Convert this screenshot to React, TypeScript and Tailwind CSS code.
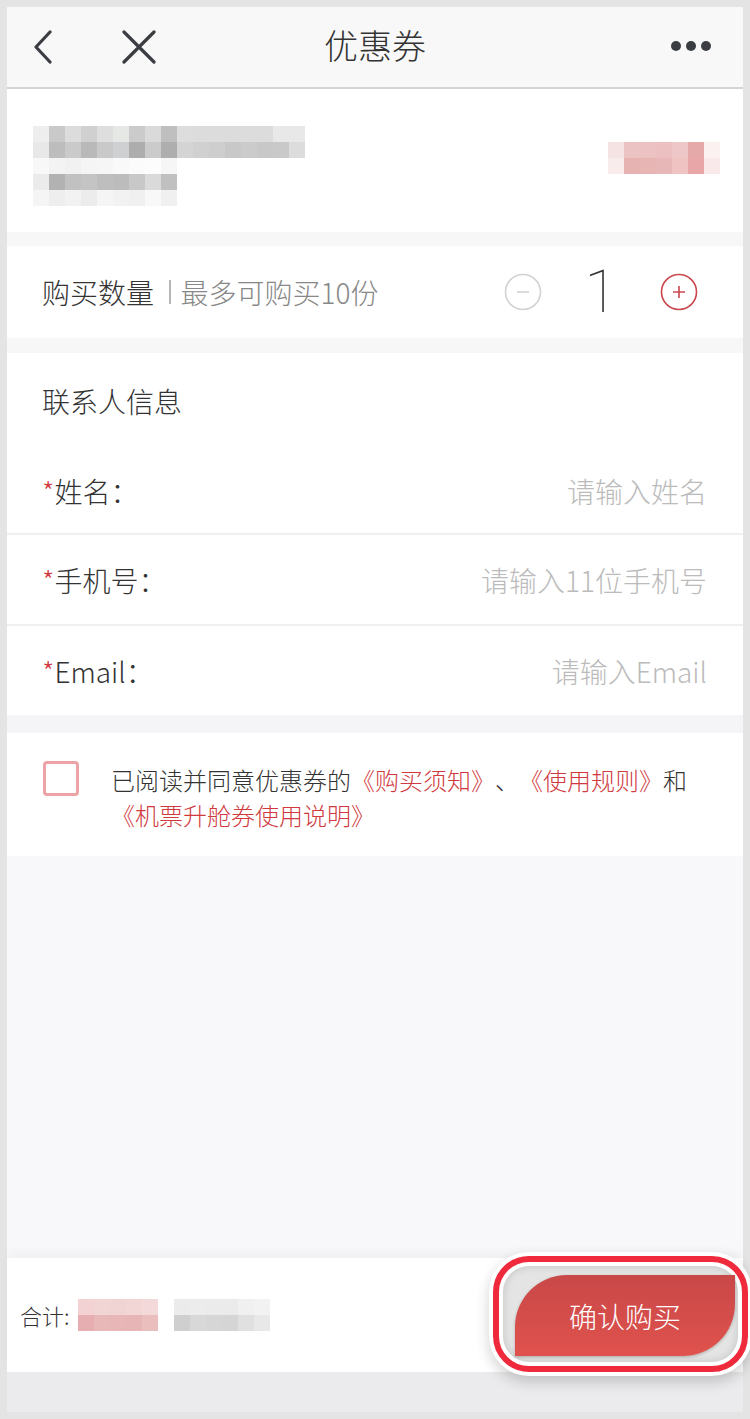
import React from "react";

const FONT = "font-['Noto_Sans_CJK_SC','Noto_Sans',sans-serif] font-light [text-spacing-trim:space-all]";

function Mosaic({ rows, cell = 16, h = 16 }: { rows: string[][]; cell?: number; h?: number }) {
  return (
    <div className="flex flex-col">
      {rows.map((r, i) => (
        <div key={i} className="flex">
          {r.map((c, j) => (
            <div key={j} style={{ width: cell, height: h, background: c }} />
          ))}
        </div>
      ))}
    </div>
  );
}

export default function App() {
  const block1 = [
    ["#eeeeee", "#c9c9c9", "#dcdcdc", "#d0d0d0", "#dedede", "#e6e8e6", "#cbcbcb", "#dadada", "#bfbfbf", "#dddddd", "#dcdcdc", "#dcdcdc", "#dcdcdc", "#dcdcdc", "#dcdcdc", "#e8e8e8", "#e8e8e8"],
    ["#e8e8e8", "#bdbdbd", "#cacaca", "#b9b9b9", "#c9c9c9", "#cfd0d1", "#adadad", "#cbcbcb", "#aeaeae", "#d4d4d4", "#d0d0d0", "#cecece", "#c8c8c8", "#cbcbcb", "#c8c8c8", "#c9c9c9", "#dcdcdc"],
    ["#f8f8f8", "#f3f3f3", "#f1f1f1", "#f5f5f5", "#f6f6f6", "#f9f9f9", "#fbfbfb", "#fcfcfc", "#f6f6f6"],
    ["#ebebeb", "#b2b2b2", "#c1c1c1", "#c4c4c4", "#bebebe", "#bcbcbc", "#c8c8c8", "#dadada", "#c0c0c0"],
    ["#f5f5f5", "#eeeeee", "#f2f2f2", "#ececec", "#f5f5f5", "#f2f2f2", "#f0f0f0", "#f8f8f8", "#f0f0f0"],
  ];
  const pink = [
    ["#f5e3e3", "#ecc3c3", "#ecc2c2", "#ecc0c0", "#eec8c8", "#e5a9a9", "#fbf1f1"],
    ["#f8ecec", "#e6b2b2", "#e8b5b5", "#e6b7b6", "#eec3c2", "#e8a6a8", "#f9e9eb"],
  ];
  const totalPink = [
    ["#f3d2d4", "#f1d4d4", "#f0d4d4", "#f2d6d5", "#f4d9da"],
    ["#e6aeb0", "#e8b8b8", "#e8b6b6", "#e7b5b5", "#ebbebe"],
  ];
  const totalGray = [
    ["#ebebeb", "#ececec", "#ebebeb", "#ebebeb", "#f0f0f0", "#f2f2f2"],
    ["#cfcfcf", "#d8d8d8", "#d6d6d6", "#d5d5d5", "#e0e0e0", "#e8e8e8"],
  ];

  return (
    <div className={`w-[750px] h-[1419px] bg-[#e4e4e4] pt-[7px] pl-[7px] pr-[7px] pb-[7px] overflow-hidden ${FONT} text-[#333]`}>
      <div className="flex flex-col h-[1405px] bg-[#f8f8fa]">
        {/* Header */}
        <div className="relative flex items-center h-[82px] bg-[#f8f8f8] border-b-2 border-[#d4d4d4] shrink-0">
          <svg className="absolute left-[26px] top-[23px]" width="20" height="34" viewBox="0 0 20 34">
            <path d="M17 2 L3 17 L17 32" fill="none" stroke="#3a3d42" strokeWidth="3.2" strokeLinecap="round" strokeLinejoin="round" />
          </svg>
          <svg className="absolute left-[115px] top-[23px]" width="34" height="34" viewBox="0 0 34 34">
            <path d="M2 2 L32 32 M32 2 L2 32" fill="none" stroke="#3a3d42" strokeWidth="3.2" strokeLinecap="round" />
          </svg>
          <div className="w-full text-center text-[34px] leading-none text-[#333] pb-[4px]">优惠券</div>
          <div className="absolute right-[32px] top-[34px] flex gap-[5px]">
            <div className="w-[10px] h-[10px] rounded-full bg-[#3a3d42]" />
            <div className="w-[10px] h-[10px] rounded-full bg-[#3a3d42]" />
            <div className="w-[10px] h-[10px] rounded-full bg-[#3a3d42]" />
          </div>
        </div>

        {/* Product card */}
        <div className="flex justify-between items-start h-[143px] bg-white shrink-0">
          <div className="pl-[26px] pt-[37px]">
            <Mosaic rows={block1} />
          </div>
          <div className="pr-[23px] pt-[53px]">
            <Mosaic rows={pink} />
          </div>
        </div>

        <div className="h-[14px] bg-[#f7f7f7] shrink-0" />

        {/* Quantity */}
        <div className="flex items-center h-[92px] bg-white pl-[35px] pr-[45px] shrink-0">
          <span className="text-[28px]">购买数量</span>
          <span className="w-[1.5px] h-[24px] bg-[#b5b5b5] ml-[15px] mr-[10px]" />
          <span className="text-[28px] text-[#888]">最多可购买10份</span>
          <div className="ml-auto flex items-center">
            <svg width="38" height="38" viewBox="0 0 38 38">
              <circle cx="19" cy="19" r="17.5" fill="none" stroke="#d2d2d2" strokeWidth="1.6" />
              <path d="M13 19 H25" stroke="#d2d2d2" strokeWidth="1.6" />
            </svg>
            <span className="w-[118px] text-center font-['Roboto','Noto_Sans',sans-serif] font-thin text-[60px] leading-none text-[#333]">1</span>
            <svg width="38" height="38" viewBox="0 0 38 38">
              <circle cx="19" cy="19" r="17.5" fill="none" stroke="#c9474d" strokeWidth="1.6" />
              <path d="M13 19 H25 M19 13 V25" stroke="#c9474d" strokeWidth="1.6" />
            </svg>
          </div>
        </div>

        <div className="h-[15px] bg-[#f7f7f7] shrink-0" />

        {/* Contact */}
        <div className="bg-white shrink-0">
          <div className="flex items-center h-[95px] pl-[35px] text-[28px]">联系人信息</div>
          <div className="flex items-center justify-between h-[87px] pl-[35px] pr-[36px] border-b-2 border-[#f0f0f0]">
            <span className="text-[28px]"><span className="text-[#d0393e]">*</span>姓名：</span>
            <span className="text-[28px] text-[#bbb]">请输入姓名</span>
          </div>
          <div className="flex items-center justify-between h-[91px] pl-[35px] pr-[36px] border-b-2 border-[#f0f0f0]">
            <span className="text-[28px]"><span className="text-[#d0393e]">*</span>手机号：</span>
            <span className="text-[28px] text-[#bbb]">请输入11位手机号</span>
          </div>
          <div className="flex items-center justify-between h-[89px] pl-[35px] pr-[36px]">
            <span className="text-[28px]"><span className="text-[#d0393e]">*</span>Email：</span>
            <span className="text-[28px] text-[#bbb]">请输入Email</span>
          </div>
        </div>

        <div className="h-[18px] bg-[#f5f5f7] shrink-0" />

        {/* Agreement */}
        <div className="flex items-start h-[123px] bg-white pl-[36px] pr-[20px] pt-[28px] shrink-0">
          <div className="w-[36px] h-[35px] border-[3px] border-[#eba3a6] rounded-[4px] shrink-0" />
          <div className="ml-[32px] text-[24px] leading-[35px] text-[#333] pt-[1px] whitespace-nowrap">
            已阅读并同意优惠券的<span className="text-[#d0393e]">《购买须知》</span>、<span className="text-[#d0393e]">《使用规则》</span>和
            <br />
            <span className="text-[#d0393e]">《机票升舱券使用说明》</span>
          </div>
        </div>

        <div className="flex-1 bg-[#f8f8fa]" />

        {/* Bottom bar */}
        <div className="relative flex items-center h-[114px] bg-white shrink-0 pl-[13px] shadow-[0_-6px_10px_rgba(0,0,0,0.03)]">
          <span className="text-[22px] text-[#333]">合计:</span>
          <div className="ml-[8px]"><Mosaic rows={totalPink} /></div>
          <div className="ml-[16px]"><Mosaic rows={totalGray} /></div>

          <div className="absolute left-[482px] top-[-6px] w-[263px] h-[124px] rounded-[40px] bg-white p-[4px] shadow-[0_6px_14px_rgba(0,0,0,0.18)]">
            <div className="w-full h-full rounded-[36px] border-[6px] border-[#ee2a3c] bg-white p-[4px]">
              <div className="w-full h-full rounded-[26px] bg-[#e4e4e4] shadow-[inset_0_0_8px_rgba(0,0,0,0.15)] pl-[12px] pr-[3px] pt-[9px] pb-[6px]">
                <div className="w-full h-full flex items-center justify-center rounded-tl-[52px] rounded-br-[52px] bg-gradient-to-b from-[#c84848] to-[#e0524d] text-white text-[28px] shadow-[0_1px_3px_rgba(0,0,0,0.25)]">
                  确认购买
                </div>
              </div>
            </div>
          </div>
        </div>

        <div className="h-[40px] bg-[#ebebed] shrink-0" />
      </div>
    </div>
  );
}
